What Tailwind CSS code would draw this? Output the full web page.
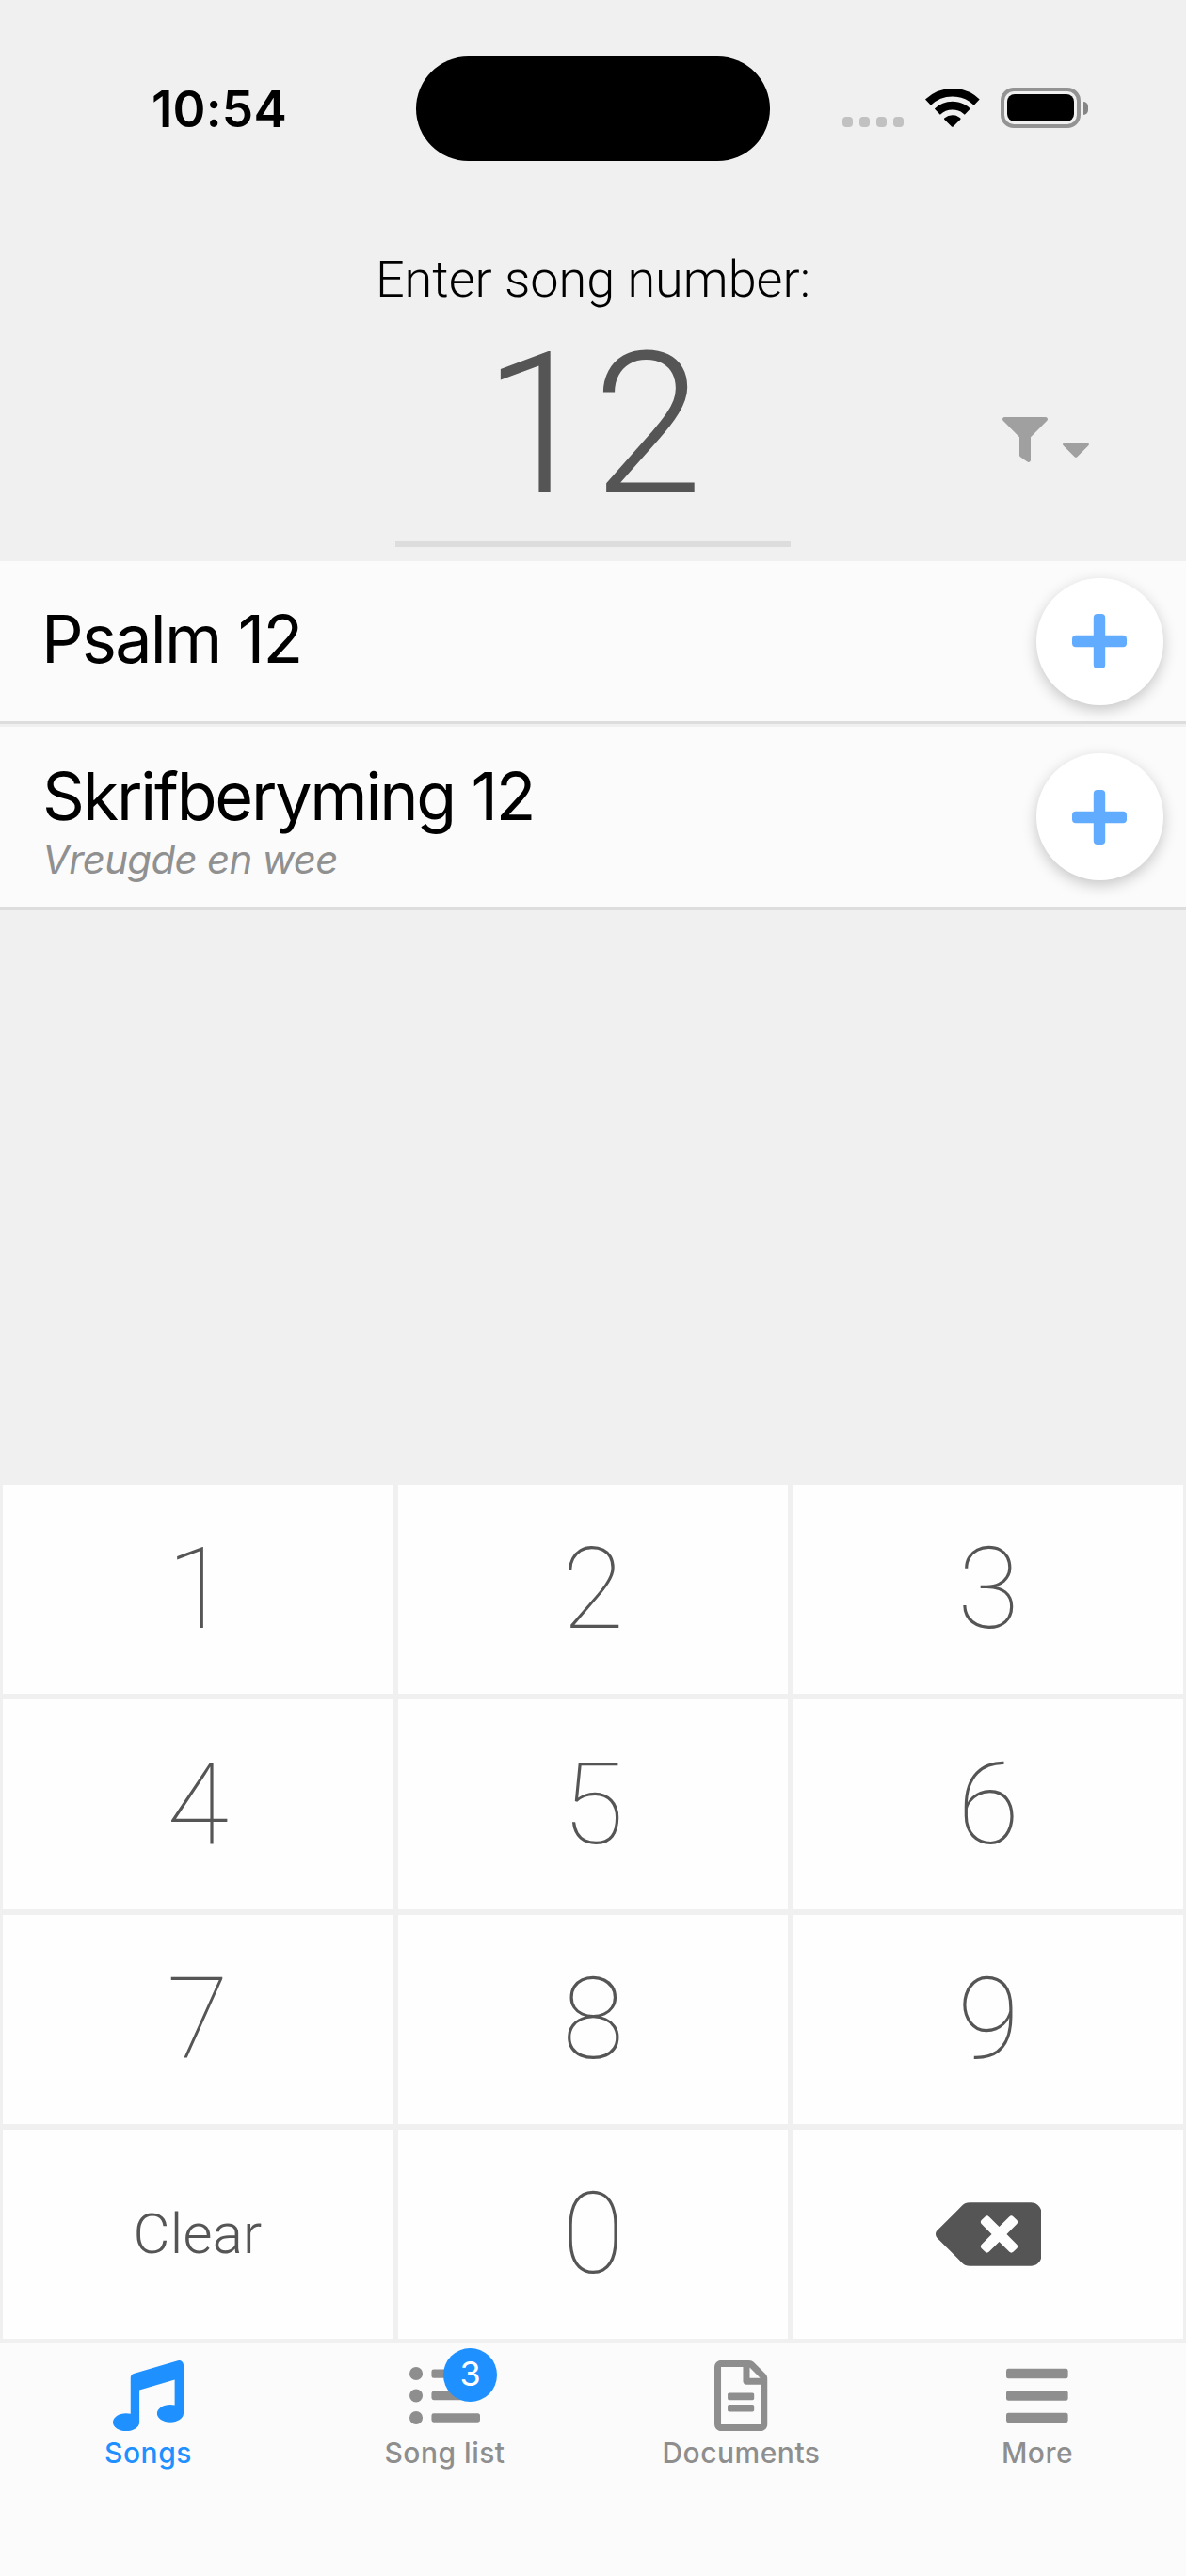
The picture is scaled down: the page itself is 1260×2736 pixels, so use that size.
<!DOCTYPE html>
<html lang="en">
<head>
<meta charset="utf-8">
<title>Songs</title>
<script src="https://cdn.jsdelivr.net/npm/@tailwindcss/browser@4"></script>
</head>
<body class="w-[1260px] h-[2736px] overflow-hidden bg-[#f0f0f0] font-['Inter',sans-serif] text-black flex flex-col">
  <!-- Status bar -->
  <div class="h-[230px] shrink-0 flex items-start pt-[60px]">
    <div class="w-[442px] h-[111px] flex items-center pl-[161px]">
      <span class="text-[53px] leading-[64px] font-semibold tracking-[0.2px] whitespace-nowrap mt-[1px]">10:54</span>
    </div>
    <div class="w-[376px] h-[111px] rounded-[56px] bg-black"></div>
    <div class="flex items-start pl-[77px] pt-[33px]">
      <div class="flex gap-[7px] pt-[31px]">
        <i class="size-[11px] rounded-[4px] bg-[#c1c1c1]"></i><i class="size-[11px] rounded-[4px] bg-[#c1c1c1]"></i><i class="size-[11px] rounded-[4px] bg-[#c1c1c1]"></i><i class="size-[11px] rounded-[4px] bg-[#c1c1c1]"></i>
      </div>
      <svg class="w-[58px] h-[42px] ml-[23px]" viewBox="0 0 58 42">
        <g fill="none" stroke="#000" stroke-width="8.6">
          <path d="M2.9 15.6A37.4 37.4 0 0 1 54.7 15.6"/>
          <path d="M12.8 25.6A23 23 0 0 1 44.8 25.6"/>
        </g>
        <path d="M20.4 33.9q-.9-.9.1-1.7a13.6 13.6 0 0 1 16.6 0q1 .8.1 1.7L29.6 41.4q-.8.8-1.6 0z"/>
      </svg>
      <div class="w-[85px] h-[43px] ml-[22px] rounded-[14px] border-4 border-[#939393] p-[3px]">
        <div class="h-[29px] rounded-[8px] bg-black"></div>
      </div>
      <i class="w-[5px] h-[14px] ml-[3px] mt-[15px] rounded-r-[7px] bg-[#858585]"></i>
    </div>
  </div>

  <!-- Song number entry -->
  <header class="h-[366px] shrink-0 pt-[33px] font-['Roboto',sans-serif]">
    <h1 class="text-center text-[54px] leading-[68px] font-light">Enter song number:</h1>
    <div class="grid grid-cols-3">
      <div></div>
      <div class="h-[250px] border-b-6 border-[#ddd] text-center text-[210px] leading-[240px] font-light text-[#555]">12</div>
      <div class="flex items-start pl-[225px] pt-[112px] text-[#a0a0a0]">
        <svg class="size-[48px]" viewBox="0 0 512 512" fill="currentColor"><path d="M487.976 0H24.028C2.71 0-8.047 25.866 7.058 40.971L192 225.941V432c0 7.831 3.821 15.17 10.237 19.662l80 55.98C298.02 518.69 320 507.493 320 487.98V225.941l184.947-184.97C520.021 25.896 509.338 0 487.976 0z"/></svg>
        <svg class="w-[30px] h-[48px] ml-[15px] mt-[9px]" viewBox="0 0 320 512" fill="currentColor"><path d="M31.3 192h257.3c17.8 0 26.7 21.5 14.1 34.1L174.1 354.8c-7.8 7.8-20.5 7.8-28.3 0L17.2 226.1C4.6 213.5 13.5 192 31.3 192z"/></svg>
      </div>
    </div>
  </header>

  <!-- Matching songs -->
  <main class="h-[978px] shrink-0">
    <div class="h-[173px] flex items-center justify-between bg-[#fbfbfb] border-b-3 border-[#ddd] pl-[44px] pr-[24px]">
      <div class="text-[70px] leading-[84px] mt-[-4px] tracking-[-1.7px]">Psalm 12</div>
      <button class="size-[135px] rounded-full bg-white shadow-[0_5px_15px_rgba(0,0,0,0.21)] flex items-center justify-center">
        <svg class="w-[58px] h-[58px] mr-[1px]" viewBox="0 0 58 58" fill="#62acff"><rect x="22.8" width="12.4" height="58" rx="4"/><rect y="22.8" width="58" height="12.4" rx="4"/></svg>
      </button>
    </div>
    <div class="h-[194px] mt-[3px] flex items-center justify-between bg-[#fbfbfb] border-b-3 border-[#ddd] pl-[45px] pr-[24px]">
      <div class="mt-[7px]">
        <div class="text-[70px] leading-[84px] tracking-[-2.2px]">Skrifberyming 12</div>
        <div class="text-[42px] leading-[50px] italic text-[#909090] tracking-[-0.7px]">Vreugde en wee</div>
      </div>
      <button class="size-[135px] rounded-full bg-white shadow-[0_5px_15px_rgba(0,0,0,0.21)] flex items-center justify-center">
        <svg class="w-[58px] h-[58px] mr-[1px]" viewBox="0 0 58 58" fill="#62acff"><rect x="22.8" width="12.4" height="58" rx="4"/><rect y="22.8" width="58" height="12.4" rx="4"/></svg>
      </button>
    </div>
  </main>

  <!-- Keypad -->
  <section class="h-[914px] shrink-0 grid grid-cols-3 grid-rows-[222px_223px_222px_222px] gap-[6px] p-[3px] font-['Roboto',sans-serif] text-[120px] leading-[140px] font-thin text-[#555] *:bg-[#fefefe] *:flex *:items-center *:justify-center">
    <div>1</div><div>2</div><div>3</div>
    <div>4</div><div>5</div><div>6</div>
    <div>7</div><div>8</div><div>9</div>
    <div class="text-[60px] font-light tracking-[0.2px]">Clear</div>
    <div>0</div>
    <div><svg class="w-[112.5px] h-[90px]" viewBox="0 0 640 512" fill="currentColor"><path d="M576 64H205.26A63.97 63.97 0 0 0 160 82.75L9.37 233.37c-12.5 12.5-12.5 32.76 0 45.25L160 429.25c12 12 28.28 18.75 45.25 18.75H576c35.35 0 64-28.65 64-64V128c0-35.35-28.65-64-64-64zm-84.69 254.06c6.25 6.25 6.25 16.38 0 22.63l-22.62 22.62c-6.25 6.25-16.38 6.25-22.63 0L384 301.25l-62.06 62.06c-6.25 6.25-16.38 6.25-22.63 0l-22.62-22.62c-6.25-6.25-6.25-16.38 0-22.63L338.75 256l-62.06-62.06c-6.25-6.25-6.25-16.38 0-22.63l22.62-22.62c6.25-6.25 16.38-6.25 22.63 0L384 210.75l62.06-62.06c6.25-6.25 16.38-6.25 22.63 0l22.62 22.62c6.25 6.25 6.25 16.38 0 22.63L429.25 256l62.06 62.06z"/></svg></div>
  </section>

  <!-- Tab bar -->
  <nav class="h-[248px] shrink-0 bg-[#fbfbfb] grid grid-cols-4 text-[#8e8e8e] text-[30px] leading-[36px] font-medium tracking-[0.5px] *:flex *:flex-col *:items-center *:pt-[19px] *:gap-[5px]">
    <a class="text-[#1e90ff]">
      <svg class="size-[75px]" viewBox="0 0 512 512" fill="currentColor"><path d="M470.38 1.51L150.41 96A32 32 0 0 0 128 126.51v261.41A139 139 0 0 0 96 384c-53 0-96 28.66-96 64s43 64 96 64 96-28.66 96-64V214.32l256-75v184.61a138.4 138.4 0 0 0-32-3.93c-53 0-96 28.66-96 64s43 64 96 64 96-28.65 96-64V32a32 32 0 0 0-41.62-30.49z"/></svg>
      <span>Songs</span>
    </a>
    <a>
      <div class="relative size-[75px]">
        <svg class="size-[75px]" viewBox="0 0 512 512" fill="currentColor"><path d="M48 48a48 48 0 1 0 48 48 48 48 0 0 0-48-48zm0 160a48 48 0 1 0 48 48 48 48 0 0 0-48-48zm0 160a48 48 0 1 0 48 48 48 48 0 0 0-48-48zm448 16H176a16 16 0 0 0-16 16v32a16 16 0 0 0 16 16h320a16 16 0 0 0 16-16v-32a16 16 0 0 0-16-16zm0-320H176a16 16 0 0 0-16 16v32a16 16 0 0 0 16 16h320a16 16 0 0 0 16-16V80a16 16 0 0 0-16-16zm0 160H176a16 16 0 0 0-16 16v32a16 16 0 0 0 16 16h320a16 16 0 0 0 16-16v-32a16 16 0 0 0-16-16z"/></svg>
        <div class="absolute left-[36px] top-[-13px] size-[57px] rounded-full bg-[#1e90ff] text-white text-[36px] leading-[54px] font-normal tracking-normal text-center">3</div>
      </div>
      <span>Song list</span>
    </a>
    <a>
      <svg class="w-[56.25px] h-[75px]" viewBox="0 0 384 512" fill="currentColor"><path d="M288 248v28c0 6.6-5.4 12-12 12H108c-6.6 0-12-5.4-12-12v-28c0-6.6 5.4-12 12-12h168c6.6 0 12 5.4 12 12zm-12 72H108c-6.6 0-12 5.4-12 12v28c0 6.6 5.4 12 12 12h168c6.6 0 12-5.4 12-12v-28c0-6.6-5.4-12-12-12zm108-188.1V464c0 26.5-21.5 48-48 48H48c-26.5 0-48-21.5-48-48V48C0 21.5 21.5 0 48 0h204.1C264.8 0 277 5.1 286 14.1L369.9 98c9 8.9 14.1 21.2 14.1 33.9zm-128-80V128h76.1L256 51.9zM336 464V176H232c-13.3 0-24-10.7-24-24V48H48v416h288z"/></svg>
      <span>Documents</span>
    </a>
    <a>
      <svg class="w-[65.625px] h-[75px] mr-[1px]" viewBox="0 0 448 512" fill="currentColor"><rect y="60" width="448" height="72" rx="16"/><rect y="220" width="448" height="72" rx="16"/><rect y="380" width="448" height="72" rx="16"/></svg>
      <span class="mr-[1px]">More</span>
    </a>
  </nav>
</body>
</html>
